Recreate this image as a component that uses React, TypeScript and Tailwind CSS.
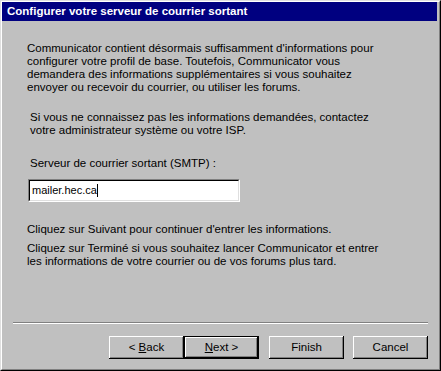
export default function App() {
    const btn = "w-[75px] h-[23px] bg-[#c0c0c0] shadow-[inset_-1px_-1px_#000,inset_1px_1px_#fff,inset_-2px_-2px_#808080] flex items-center justify-center text-[11.5px] text-black"

    return (
        <div className="w-[441px] h-[371px] bg-[#c0c0c0] border-t border-l border-t-[#dfdfdf] border-l-[#dfdfdf] border-b border-r border-b-black border-r-black font-['Liberation_Sans',Arial,sans-serif]">
            <div className="h-full flex flex-col border-t border-l border-t-white border-l-white border-b border-r border-b-[#808080] border-r-[#808080] pr-[2px]">
                <div className="h-[19px] bg-[#000080] text-white font-bold text-[11.5px] leading-[19px] pl-[5px] whitespace-nowrap">
                    Configurer votre serveur de courrier sortant
                </div>

                <div className="text-[11.5px] leading-[13px] text-black pl-[25px] whitespace-nowrap">
                    <p className="mt-[21px]">
                        Communicator contient désormais suffisamment d'informations pour<br />
                        configurer votre profil de base. Toutefois, Communicator vous<br />
                        demandera des informations supplémentaires si vous souhaitez<br />
                        envoyer ou recevoir du courrier, ou utiliser les forums.
                    </p>
                    <p className="mt-[17px] pl-[3px]">
                        Si vous ne connaissez pas les informations demandées, contactez<br />
                        votre administrateur système ou votre ISP.
                    </p>
                    <p className="mt-[20px] pl-[3px]">Serveur de courrier sortant (SMTP) :</p>
                    <div className="mt-[9px] ml-[1px] w-[212px] h-[23px] bg-white border-t border-l border-t-[#808080] border-l-[#808080] border-b border-r border-b-white border-r-white">
                        <div className="h-full flex items-center pl-[2px] text-[11px] border-t border-l border-t-black border-l-black border-b border-r border-b-[#dfdfdf] border-r-[#dfdfdf]">
                            <span>mailer.hec.ca</span>
                            <span className="w-[1px] h-[13px] bg-black"></span>
                        </div>
                    </div>
                    <p className="mt-[21px]">Cliquez sur Suivant pour continuer d'entrer les informations.</p>
                    <p className="mt-[6px]">
                        Cliquez sur Terminé si vous souhaitez lancer Communicator et entrer<br />
                        les informations de votre courrier ou de vos forums plus tard.
                    </p>
                </div>

                <div className="mt-auto mb-[10px]">
                    <div className="ml-[11px] mr-[9px] border-t border-t-[#808080] border-b border-b-white"></div>
                    <div className="flex justify-end mt-[12px] mr-[9px]">
                        <div className={btn}>
                            &lt; <span className="underline ml-[3px]">B</span>ack
                        </div>
                        <div className="border border-black">
                            <div className="w-[73px] h-[21px] bg-[#c0c0c0] shadow-[inset_-1px_-1px_#000,inset_1px_1px_#fff,inset_-2px_-2px_#808080] flex items-center justify-center text-[11.5px] text-black">
                                <span className="underline">N</span>ext &gt;
                            </div>
                        </div>
                        <div className={btn + " ml-[10px]"}>Finish</div>
                        <div className={btn + " ml-[9px]"}>Cancel</div>
                    </div>
                </div>
            </div>
        </div>
    )
}
